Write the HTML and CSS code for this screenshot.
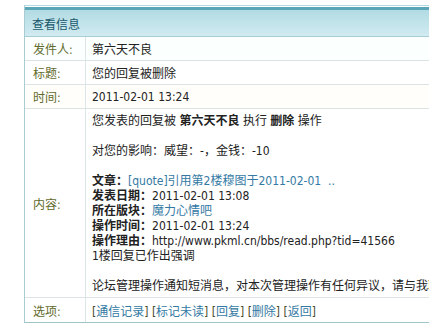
FILE: index.html
```html
<!DOCTYPE html>
<html lang="zh-CN">
<head>
  <meta charset="UTF-8">
  <title>查看信息</title>
  <link rel="stylesheet" href="styles.css">
</head>
<body>
  <div class="msg-box">
    <table class="msg-table">
      <tr>
        <th colspan="2" class="msg-head">查看信息</th>
      </tr>
      <tr class="row-a">
        <td class="label">发件人:</td>
        <td class="value">第六天不良</td>
      </tr>
      <tr>
        <td class="label">标题:</td>
        <td class="value">您的回复被删除</td>
      </tr>
      <tr class="row-b">
        <td class="label">时间:</td>
        <td class="value">2011-02-01 13:24</td>
      </tr>
      <tr>
        <td class="label">内容:</td>
        <td class="value content">
          您发表的回复被 <b>第六天不良</b> 执行 <b>删除</b> 操作<br><br>
          对您的影响：威望：-，金钱：-10<br><br>
          <b>文章：</b><a href="#">[quote]引用第2楼穆图于2011-02-01 &nbsp;..</a><br>
          <b>发表日期：</b>2011-02-01 13:08<br>
          <b>所在版块：</b><a href="#">魔力心情吧</a><br>
          <b>操作时间：</b>2011-02-01 13:24<br>
          <b>操作理由：</b>http://www.pkml.cn/bbs/read.php?tid=41566<br>
          1楼回复已作出强调<br><br>
          论坛管理操作通知短消息，对本次管理操作有任何异议，请与我联系。
        </td>
      </tr>
      <tr>
        <td class="label last">选项:</td>
        <td class="value last options">
          [<a href="#">通信记录</a>] [<a href="#">标记未读</a>] [<a href="#">回复</a>] [<a href="#">删除</a>] [<a href="#">返回</a>]
        </td>
      </tr>
    </table>
  </div>
</body>
</html>
```

FILE: styles.css
```css
body {
  margin: 0;
  padding: 5px 0 0 24px;
  font-family: "DejaVu Sans Condensed", Tahoma, "Noto Sans CJK SC", sans-serif;
  font-size: 12px;
  color: #222;
  background: #fff;
  overflow: hidden;
  text-spacing-trim: space-all;
}

.msg-box {
  width: 560px;
  border-top: 1px solid #b4dae1;
  border-left: 1px solid #a9cbd2;
  border-bottom: 1px solid #9fc3c9;
  padding-top: 1px;
}

.msg-table {
  width: 100%;
  border-collapse: separate;
  border-spacing: 0;
}

.msg-head {
  height: 26px;
  padding: 0 0 0 7px;
  text-align: left;
  font-weight: normal;
  color: #17586b;
  border-top: 3px solid #5aa6b7;
  border-bottom: 1px solid #a8ccd3;
  background: linear-gradient(#b2dbe3, #d1ebf1);
}

.msg-table td {
  height: 23px;
  padding: 0;
  border-bottom: 1px solid #dce3e4;
  white-space: nowrap;
}

.row-a td {
  background: #fbfffe;
}

.row-b td {
  background: #fffefa;
}

.label {
  width: 52px;
  padding-left: 8px !important;
  color: #5f6a2c;
  border-right: 1px solid #dce6e8;
}

.value {
  padding-left: 6px !important;
}

.content {
  line-height: 15px;
  padding-top: 5px !important;
  padding-bottom: 3px !important;
}

.msg-table td.last {
  height: 24px;
  border-bottom: none;
}

a {
  color: #3379a3;
  text-decoration: none;
}

.options {
  color: #4a4a2a;
}
```
